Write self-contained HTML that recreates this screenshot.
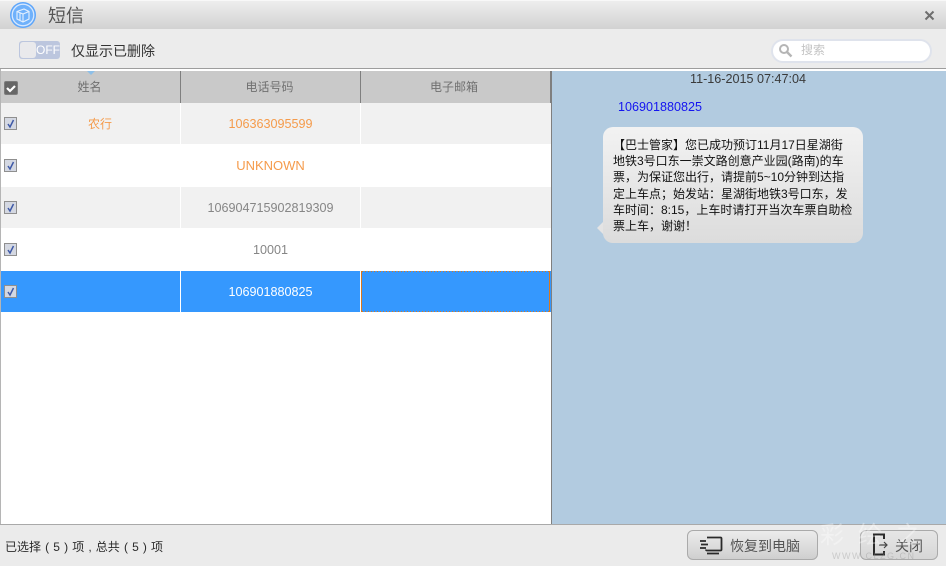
<!DOCTYPE html>
<html><head><meta charset="utf-8">
<style>
html,body{margin:0;padding:0;width:946px;height:566px;overflow:hidden;background:#fff}
body{font-family:"Liberation Sans","Noto Sans CJK SC",sans-serif;font-size:12px;position:relative}
div,span,svg{position:absolute;box-sizing:border-box}
.t{white-space:nowrap}
.c{text-align:center}
.n{font-size:12.6px}
.cb{left:4px;width:13px;height:13px;border:1px solid #8f8f8f;background:#d4d8e2}
.cb svg{left:0;top:0}
.row{left:1px;width:550px;height:41px}
</style></head>
<body>
<!-- title bar -->
<div style="left:0;top:0;width:946px;height:29px;background:linear-gradient(#eeeeee,#d2d2d2);border-top:1px solid #f8f8f8"></div>
<svg style="left:10px;top:2px" width="26" height="26" viewBox="0 0 26 26">
<circle cx="13" cy="13" r="13" fill="#5ea6fa"/><circle cx="13" cy="13" r="10.800" fill="#6fb1fb" stroke="#d6e7fd" stroke-width="1.300"/>
<path d="M7 9.500 14 7l5 2.500v7.500l-6 3-6-3zM7 9.500l6 2.500 6-2.500M13 12v7.500M10 11v7" fill="none" stroke="#e4f0fe" stroke-width="1.100"/>
</svg>
<div class="t" style="left:48px;top:4px;font-size:18px;line-height:24px;color:#555">短信</div>
<svg style="left:924px;top:10px" width="11" height="11" viewBox="0 0 11 11"><path d="M1.500 1.500l8 8M9.500 1.500l-8 8" stroke="#6e6e6e" stroke-width="2"/></svg>
<!-- toolbar -->
<div style="left:0;top:29px;width:946px;height:40px;background:#ececec;border-bottom:1px solid #9d9d9d"></div>
<div style="left:19px;top:41px;width:41px;height:18px;background:#bcc6de;border-radius:3px"></div>
<div style="left:20px;top:42px;width:16px;height:16px;background:#e9e9ec;border-radius:3px"></div>
<div class="t" style="left:36px;top:41px;line-height:18px;font-size:12px;color:#fff">OFF</div>
<div class="t" style="left:71px;top:41px;font-size:14px;line-height:20px;color:#333">仅显示已删除</div>
<div style="left:771px;top:39px;width:161px;height:24px;background:#fff;border:2px solid #dfe3ec;border-radius:12px"></div>
<svg style="left:778px;top:43px" width="15" height="15" viewBox="0 0 15 15"><circle cx="6" cy="6" r="4" fill="none" stroke="#b5b5b5" stroke-width="2"/><path d="M9 9l4.500 4.500" stroke="#b5b5b5" stroke-width="2.400"/></svg>
<div class="t" style="left:801px;top:43px;line-height:15px;font-size:12px;color:#c4c4c4">搜索</div>
<!-- left border -->
<div style="left:0;top:69px;width:1px;height:456px;background:#b5b5b5"></div>
<!-- header -->
<div style="left:1px;top:71px;width:550px;height:32px;background:#c9c9c9"></div>
<div style="left:180px;top:71px;width:1px;height:32px;background:#7f7f7f"></div>
<div style="left:360px;top:71px;width:1px;height:32px;background:#7f7f7f"></div>
<svg style="left:87px;top:71px" width="8" height="4" viewBox="0 0 8 4"><path d="M0 0h8L4 4z" fill="#8dbfe8"/></svg>
<div style="left:4px;top:81px;width:14px;height:14px;background:#666;border:1px solid #7c7c7c;border-radius:2px"><svg style="left:0;top:0" width="12" height="12" viewBox="0 0 12 12"><path d="M2 6l3 3 5-5" fill="none" stroke="#fff" stroke-width="2.200"/></svg></div>
<div class="t c" style="left:0;top:78px;width:179px;line-height:18px;font-size:12px;color:#707070">姓名</div>
<div class="t c" style="left:180px;top:78px;width:179px;line-height:18px;font-size:12px;color:#707070">电话号码</div>
<div class="t c" style="left:360px;top:78px;width:188px;line-height:18px;font-size:12px;color:#707070">电子邮箱</div>
<!-- rows -->
<div class="row" style="top:103px;background:#f1f1f1"></div>
<div class="row" style="top:187px;background:#f1f1f1"></div>
<div class="row" style="top:271px;background:#3598fe"></div>
<div style="left:180px;top:103px;width:1px;height:210px;background:#fff"></div>
<div style="left:360px;top:103px;width:1px;height:210px;background:#fff"></div>
<div style="left:361px;top:271px;width:1px;height:41px;background:#d9781f"></div>
<div style="left:549px;top:271px;width:1px;height:41px;background:#d9781f"></div>
<svg style="left:362px;top:271px" width="187" height="41" viewBox="0 0 187 41"><path d="M0 .5H187M0 40.500H187" stroke="#d9781f" stroke-width="1" stroke-dasharray="1 2" fill="none"/></svg>

<div class="cb" style="top:117px"><svg width="11" height="11" viewBox="0 0 11 11"><path d="M3 6l2 3 3.500-7" fill="none" stroke="#3f5aa8" stroke-width="1.500"/></svg></div>
<div class="cb" style="top:159px"><svg width="11" height="11" viewBox="0 0 11 11"><path d="M3 6l2 3 3.500-7" fill="none" stroke="#3f5aa8" stroke-width="1.500"/></svg></div>
<div class="cb" style="top:201px"><svg width="11" height="11" viewBox="0 0 11 11"><path d="M3 6l2 3 3.500-7" fill="none" stroke="#3f5aa8" stroke-width="1.500"/></svg></div>
<div class="cb" style="top:243px"><svg width="11" height="11" viewBox="0 0 11 11"><path d="M3 6l2 3 3.500-7" fill="none" stroke="#3f5aa8" stroke-width="1.500"/></svg></div>
<div class="cb" style="top:285px"><svg width="11" height="11" viewBox="0 0 11 11"><path d="M3 6l2 3 3.500-7" fill="none" stroke="#3f5aa8" stroke-width="1.500"/></svg></div>

<div class="t c" style="left:20px;top:104px;width:160px;line-height:41px;color:#f59b4b">农行</div>
<div class="t c n" style="left:181px;top:104px;width:179px;line-height:41px;color:#f59b4b">106363095599</div>
<div class="t c" style="left:181px;top:145px;width:179px;line-height:41px;color:#f59b4b;font-size:13px">UNKNOWN</div>
<div class="t c n" style="left:181px;top:188px;width:179px;line-height:41px;color:#868686">106904715902819309</div>
<div class="t c n" style="left:181px;top:230px;width:179px;line-height:41px;color:#868686">10001</div>
<div class="t c n" style="left:181px;top:272px;width:179px;line-height:41px;color:#fff">106901880825</div>
<!-- right panel -->
<div style="left:550px;top:71px;width:2px;height:32px;background:#7f7f7f"></div>
<div style="left:551px;top:103px;width:1px;height:422px;background:#7f7f7f"></div>
<div style="left:552px;top:71px;width:394px;height:454px;background:#b2cbe0"></div>
<div class="t n" style="left:690px;top:71px;line-height:16px;color:#3a3a3a">11-16-2015 07:47:04</div>
<div class="t n" style="left:618px;top:99px;line-height:16px;color:#1414f0">106901880825</div>
<svg style="left:596px;top:220px" width="9" height="16" viewBox="0 0 9 16"><path d="M9 0v16L1 8z" fill="#e4e4e4"/></svg>
<div style="left:603px;top:127px;width:260px;height:116px;border-radius:10px;background:linear-gradient(#f2f2f2,#dcdcdc)"></div>
<div class="t" style="left:613px;top:137px;font-size:12px;line-height:16.200px;color:#111">【巴士管家】您已成功预订11月17日星湖街<br>地铁3号口东一崇文路创意产业园(路南)的车<br>票，为保证您出行，请提前5~10分钟到达指<br>定上车点；始发站：星湖街地铁3号口东，发<br>车时间：8:15，上车时请打开当次车票自助检<br>票上车，谢谢！</div>
<!-- footer -->
<div style="left:0;top:524px;width:946px;height:42px;background:#ebebeb;border-top:1px solid #a9a9a9"></div>
<div class="t" style="left:5px;top:539px;line-height:16px;color:#2b2b2b;word-spacing:0.800px">已选择 ( 5 ) 项 , 总共 ( 5 ) 项</div>
<div style="left:687px;top:530px;width:131px;height:30px;border:1px solid #aaa;border-radius:6px;background:linear-gradient(#ececec,#cfcfcf)"></div>
<svg style="left:699px;top:535px" width="24" height="20" viewBox="0 0 24 20"><path d="M8 2.500h13.500a1 1 0 0 1 1 1v11a1 1 0 0 1-1 1H8a1 1 0 0 1-1-1M8 18.500h12" fill="none" stroke="#2a2a2a" stroke-width="1.800"/><path d="M1 6h6M2 9.500h7M1 13h6" stroke="#2a2a2a" stroke-width="1.800"/></svg>
<div class="t" style="left:730px;top:537px;font-size:14px;line-height:18px;color:#555">恢复到电脑</div>
<div style="left:860px;top:530px;width:78px;height:30px;border:1px solid #aaa;border-radius:6px;background:linear-gradient(#e6e6e6,#d6d6d6)"></div>
<svg style="left:871px;top:533px" width="20" height="24" viewBox="0 0 20 24"><path d="M13 6V1.500H3v20h10V18" fill="none" stroke="#2a2a2a" stroke-width="2"/><path d="M8 12h8M13 9l3 3-3 3" fill="none" stroke="#444" stroke-width="1.200"/></svg>
<div class="t" style="left:895px;top:537px;font-size:14px;line-height:18px;color:#555">关闭</div>
<!-- watermark -->
<div class="t" style="left:820px;top:522px;font-size:24px;line-height:28px;color:rgba(255,255,255,.35);letter-spacing:14px">彩绘之</div>
<div class="t" style="left:832px;top:551px;font-size:9px;line-height:10px;color:rgba(140,140,140,.35);letter-spacing:1.500px">WWW.CLZG.CN</div>
</body></html>
